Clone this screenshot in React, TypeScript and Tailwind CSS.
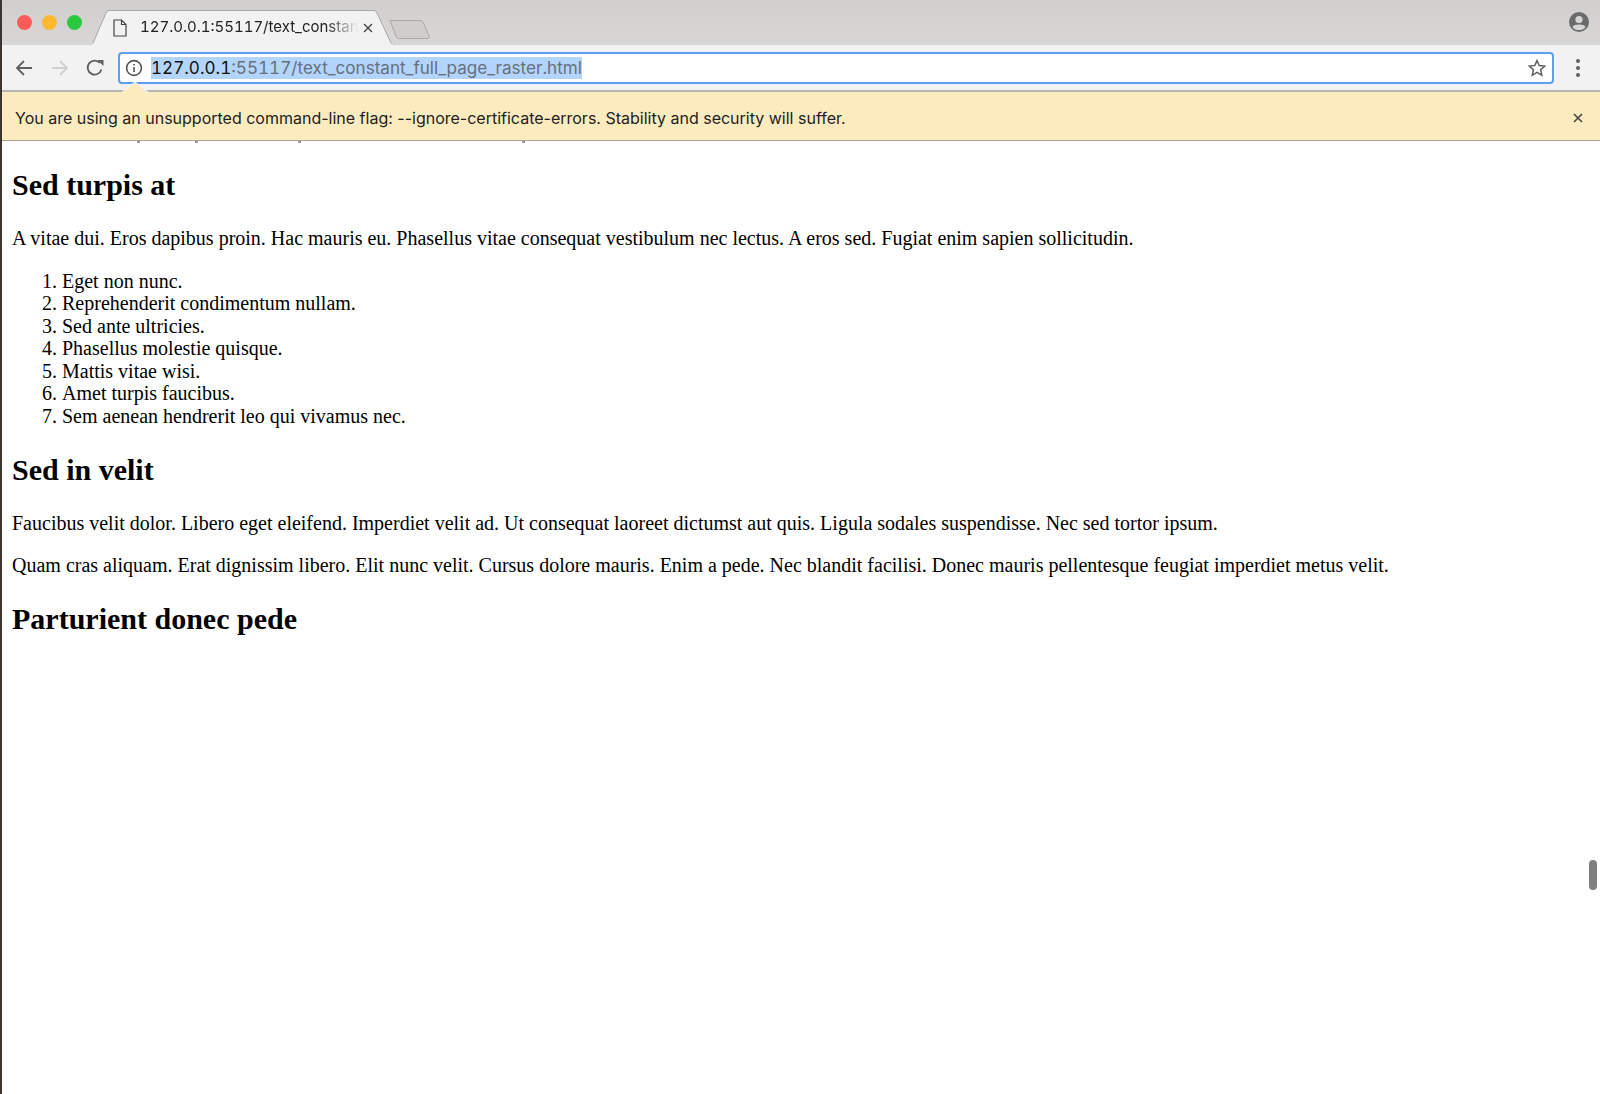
export default function App() {
  const items = [
    "Eget non nunc.",
    "Reprehenderit condimentum nullam.",
    "Sed ante ultricies.",
    "Phasellus molestie quisque.",
    "Mattis vitae wisi.",
    "Amet turpis faucibus.",
    "Sem aenean hendrerit leo qui vivamus nec.",
  ];
  const h2 = "text-[30px] leading-[34px] font-bold text-black";
  const p = "text-[20px] leading-[23px] text-black";
  return (
    <div className="relative h-[1094px] w-[1600px] overflow-hidden border-l-2 border-[#3a3530] bg-white font-['Liberation_Serif',serif]">
      {/* Tab strip */}
      <div className="relative flex h-[45px] items-start bg-gradient-to-b from-[#d0cfce] to-[#d8d7d5] font-['Inter',sans-serif]">
        <div className="ml-[15px] mt-[15px] flex gap-[10px]">
          <span className="h-[15px] w-[15px] rounded-full bg-[#fc5b57]" />
          <span className="h-[15px] w-[15px] rounded-full bg-[#fdb82e]" />
          <span className="h-[15px] w-[15px] rounded-full bg-[#2ac940]" />
        </div>
        <div className="relative ml-[8px] mt-[10px] flex h-[35px] w-[304px] items-center">
          <svg className="absolute inset-0" width="304" height="35" viewBox="0 0 304 35">
            <path d="M0 35 C1.5 35 2.5 34 3.5 32 L16 3 C17 1 18 0.5 21 0.5 L282 0.5 C285 0.5 286 1 287 3 L300.5 32 C301.5 34 302.5 35 304 35 Z" fill="#f2f2f2" stroke="#a9a8a6" strokeWidth="1" />
            <path d="M1 35 L303 35" stroke="#f2f2f2" strokeWidth="2" />
          </svg>
          <svg className="relative ml-[23px] shrink-0" width="14" height="18" viewBox="0 0 14 18" fill="none" stroke="#444" strokeWidth="1.2">
            <path d="M1 1 H8.5 L13 5.5 V17 H1 Z" />
            <path d="M8.5 1 V5.5 H13" />
          </svg>
          <span className="relative ml-[13px] mt-[-2px] w-[218px] overflow-hidden whitespace-nowrap text-[15px] leading-[18px] tabular-nums text-[#222] [mask-image:linear-gradient(to_right,black_85%,transparent)]">
            127.0.0.1:55117/text_constant_full_page_raster.html
          </span>
          <svg className="relative ml-[5px]" width="10" height="10" viewBox="0 0 10 10" stroke="#444" strokeWidth="1.4">
            <path d="M1 1 L9 9 M9 1 L1 9" />
          </svg>
        </div>
        <svg className="ml-[-5px] mt-[19px]" width="42" height="21" viewBox="0 0 42 21" fill="#cfcecc" stroke="#aaa9a7">
          <path d="M1 1.5 H31 Q33 1.5 34 3 L40 17 Q41 19.5 38 19.5 H10 Q8 19.5 7 17 Z" />
        </svg>
        <svg className="absolute right-[11px] top-[12px]" width="20" height="20" viewBox="0 0 20 20">
          <circle cx="10" cy="10" r="10" fill="#6b6b6b" />
          <circle cx="10" cy="7.5" r="3.6" fill="#d6d5d3" />
          <path d="M3.5 15 C5 11.8 15 11.8 16.5 15 C15 17.5 12.5 18 10 18 C7.5 18 5 17.5 3.5 15 Z" fill="#d6d5d3" />
        </svg>
      </div>
      {/* Toolbar */}
      <div className="flex h-[47px] items-start border-b-2 border-[#b6b5b3] bg-[#f2f2f2] font-['Inter',sans-serif]">
        <svg className="ml-[13px] mt-[14px]" width="18" height="18" viewBox="0 0 18 18" fill="none" stroke="#5f5f5f" strokeWidth="1.8">
          <path d="M17 9 H2 M9 2 L2 9 L9 16" />
        </svg>
        <svg className="ml-[18px] mt-[14px]" width="18" height="18" viewBox="0 0 18 18" fill="none" stroke="#d0d0d0" strokeWidth="1.8">
          <path d="M1 9 H16 M9 2 L16 9 L9 16" />
        </svg>
        <svg className="ml-[17px] mt-[14px]" width="18" height="18" viewBox="0 0 18 18" fill="none">
          <path d="M15.4 10.5 A7 7 0 1 1 13.8 3.8" stroke="#5f5f5f" strokeWidth="1.8" />
          <path d="M11 1 H17 V7 Z" fill="#5f5f5f" transform="translate(0.5 0)" />
        </svg>
        <div className="relative ml-[14px] mt-[7px] flex h-[32px] w-[1436px] items-center rounded-[4px] border-2 border-[#5a9ff2] bg-white">
          <svg className="ml-[5px] shrink-0" width="18" height="18" viewBox="0 0 18 18" fill="none" stroke="#555" strokeWidth="1.6">
            <circle cx="9" cy="9" r="7.4" />
            <path d="M9 8 V13" />
            <path d="M9 5 V6.6" />
          </svg>
          <span className="ml-[8px] whitespace-nowrap bg-[#b3d4fd] text-[17.1px] leading-[22px] tabular-nums text-[#66707c]">
            <span className="text-[#111]">127.0.0.1</span>:55117/text_constant_full_page_raster.html
          </span>
          <svg className="ml-auto mr-[6px]" width="18" height="18" viewBox="0 0 18 18" fill="none" stroke="#5f5f5f" strokeWidth="1.5">
            <path d="M9 1.5 L11.2 6.6 L16.8 7.1 L12.6 10.8 L13.8 16.3 L9 13.4 L4.2 16.3 L5.4 10.8 L1.2 7.1 L6.8 6.6 Z" />
          </svg>
        </div>
        <div className="ml-[22px] mt-[14px] flex flex-col gap-[3px]">
          <span className="h-[4px] w-[4px] rounded-full bg-[#5f5f5f]" />
          <span className="h-[4px] w-[4px] rounded-full bg-[#5f5f5f]" />
          <span className="h-[4px] w-[4px] rounded-full bg-[#5f5f5f]" />
        </div>
      </div>
      {/* Infobar */}
      <div className="relative flex h-[49px] items-center border-b border-[#aba38d] bg-[#fdebc0] font-['Inter',sans-serif]">
        <svg className="absolute left-[119px] top-[-10px]" width="28" height="11" viewBox="0 0 28 11">
          <path d="M0 11 L14 0 L28 11 Z" fill="#fdebc0" />
          <path d="M0 11 L14 0 L28 11" fill="none" stroke="#f7f7f7" strokeWidth="1" />
        </svg>
        <span className="ml-[13px] mt-[3px] text-[16px] leading-[20px] text-[#222]">
          You are using an unsupported command-line flag: --ignore-certificate-errors. Stability and security will suffer.
        </span>
        <svg className="ml-auto mr-[17px] mt-[3px]" width="10" height="10" viewBox="0 0 10 10" stroke="#444" strokeWidth="1.6">
          <path d="M1 1 L9 9 M9 1 L1 9" />
        </svg>
      </div>
      {/* Page content */}
      <div className="relative pl-[10px]">
        <div className="flex h-[2px] items-start">
          <span className="ml-[125px] h-[2px] w-[3px] bg-[#999]" />
          <span className="ml-[55px] h-[2px] w-[3px] bg-[#999]" />
          <span className="ml-[100px] h-[2px] w-[3px] bg-[#999]" />
          <span className="ml-[221px] h-[2px] w-[3px] bg-[#999]" />
        </div>
        <h2 className={`mt-[25px] ${h2}`}>Sed turpis at</h2>
        <p className={`mt-[25px] ${p}`}>
          A vitae dui. Eros dapibus proin. Hac mauris eu. Phasellus vitae consequat vestibulum nec lectus. A eros sed. Fugiat enim sapien sollicitudin.
        </p>
        <ol className="mt-[20px] list-decimal pl-[50px] text-[20px] leading-[22.45px] text-black">
          {items.map((t) => (
            <li key={t}>{t}</li>
          ))}
        </ol>
        <h2 className={`mt-[26px] ${h2}`}>Sed in velit</h2>
        <p className={`mt-[25px] ${p}`}>
          Faucibus velit dolor. Libero eget eleifend. Imperdiet velit ad. Ut consequat laoreet dictumst aut quis. Ligula sodales suspendisse. Nec sed tortor ipsum.
        </p>
        <p className={`mt-[19px] ${p}`}>
          Quam cras aliquam. Erat dignissim libero. Elit nunc velit. Cursus dolore mauris. Enim a pede. Nec blandit facilisi. Donec mauris pellentesque feugiat imperdiet metus velit.
        </p>
        <h2 className={`mt-[25px] ${h2}`}>Parturient donec pede</h2>
      </div>
      <div className="absolute left-[1587px] top-[860px] h-[30px] w-[8px] rounded-full bg-[#7f7f7f]" />
    </div>
  );
}
